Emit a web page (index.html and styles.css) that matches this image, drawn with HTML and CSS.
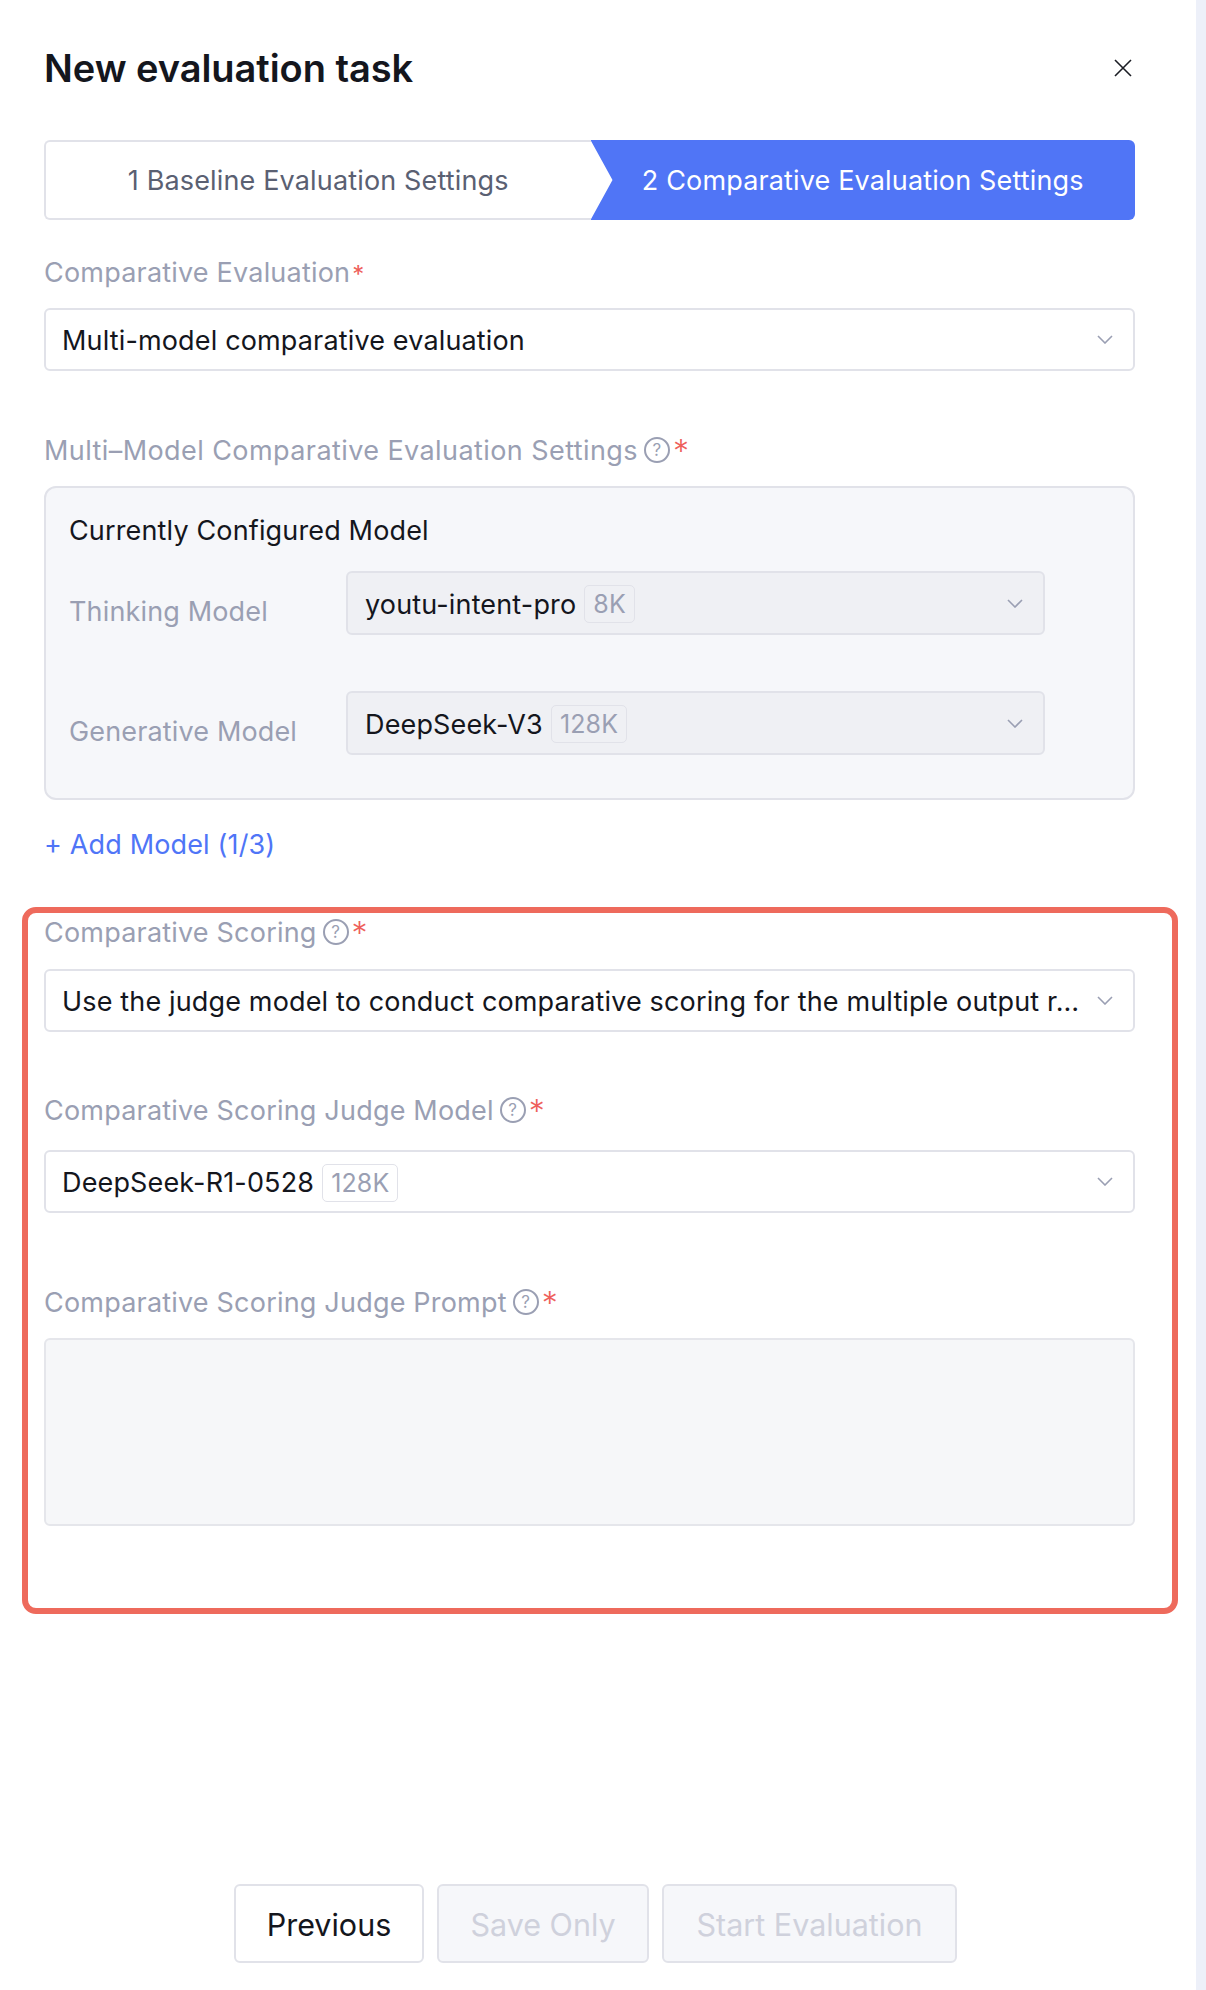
FILE: index.html
```html
<!DOCTYPE html>
<html lang="en">
<head>
    <meta charset="UTF-8">
    <title>New evaluation task</title>
    <link rel="stylesheet" href="styles.css">
</head>
<body>
    <div class="drawer">
        <div class="header">
            <h1>New evaluation task</h1>
            <svg class="close" viewBox="0 0 18 18"><path d="M1 1L17 17M17 1L1 17"/></svg>
        </div>
        <div class="steps">
            <div class="step">1 Baseline Evaluation Settings</div>
            <div class="step active">2 Comparative Evaluation Settings</div>
        </div>

        <div class="label first">Comparative Evaluation<span class="star small">*</span></div>
        <div class="select">
            <span class="value">Multi-model comparative evaluation</span>
            <svg class="arrow" viewBox="0 0 16 9"><path d="M1 1L8 8L15 1"/></svg>
        </div>

        <div class="label gap-lg wide">Multi–Model Comparative Evaluation Settings<span class="help">?</span><span class="star">*</span></div>
        <div class="model-box">
            <div class="box-title">Currently Configured Model</div>
            <div class="model-row">
                <div class="row-label">Thinking Model</div>
                <div class="select grey">
                    <span class="value">youtu-intent-pro</span><span class="tag">8K</span>
                    <svg class="arrow" viewBox="0 0 16 9"><path d="M1 1L8 8L15 1"/></svg>
                </div>
            </div>
            <div class="model-row">
                <div class="row-label">Generative Model</div>
                <div class="select grey">
                    <span class="value">DeepSeek-V3</span><span class="tag">128K</span>
                    <svg class="arrow" viewBox="0 0 16 9"><path d="M1 1L8 8L15 1"/></svg>
                </div>
            </div>
        </div>
        <div class="add-model">+ Add Model (1/3)</div>

        <div class="label scoring">Comparative Scoring<span class="help">?</span><span class="star">*</span></div>
        <div class="select">
            <span class="value">Use the judge model to conduct comparative scoring for the multiple output r…</span>
            <svg class="arrow" viewBox="0 0 16 9"><path d="M1 1L8 8L15 1"/></svg>
        </div>

        <div class="label judge">Comparative Scoring Judge Model<span class="help">?</span><span class="star">*</span></div>
        <div class="select">
            <span class="value">DeepSeek-R1-0528</span><span class="tag">128K</span>
            <svg class="arrow" viewBox="0 0 16 9"><path d="M1 1L8 8L15 1"/></svg>
        </div>

        <div class="label prompt">Comparative Scoring Judge Prompt<span class="help">?</span><span class="star">*</span></div>
        <div class="textarea"></div>

        <div class="footer">
            <button class="btn prev">Previous</button>
            <button class="btn off save">Save Only</button>
            <button class="btn off start">Start Evaluation</button>
        </div>

        <div class="highlight"></div>
    </div>
</body>
</html>
```

FILE: styles.css
```css
* { box-sizing: border-box; }
html, body { margin: 0; padding: 0; }
body { height: 1990px; background: #edf0f9; font-family: 'Inter', 'Liberation Sans', sans-serif; font-size: 27px; letter-spacing: 0.15px; overflow: hidden; }
.drawer { position: relative; width: 1196px; height: 1990px; padding: 44px 61px 0 44px; background: #fff; }

.header { display: flex; justify-content: space-between; align-items: center; height: 48px; margin-bottom: 48px; }
h1 { margin: 0; font-size: 38px; line-height: 48px; font-weight: 600; letter-spacing: -0.05px; color: #14161d; }
.close { width: 18px; height: 18px; margin-right: 3px; fill: none; stroke: #1b1d24; stroke-width: 1.6; }

.steps { display: flex; height: 80px; }
.step { flex: 1; display: flex; align-items: center; justify-content: center; color: #5a6072; background: #fff; border: 2px solid #e1e2e9; border-right: none; border-radius: 6px 0 0 6px; }
.step.active { color: #fff; background: #5075f6; border: none; border-radius: 0 6px 6px 0; clip-path: polygon(0 0, 100% 0, 100% 100%, 0 100%, 22px 50%); }

.label { display: flex; align-items: center; height: 36px; margin-bottom: 18px; letter-spacing: 0.2px; color: #9a9fb3; }
.label.wide { letter-spacing: 0.42px; }
.label.first { margin-top: 34px; }
.label.gap-lg { margin-top: 61px; }
.label.scoring { margin-top: 51px; margin-bottom: 19px; }
.label.judge { margin-top: 60px; margin-bottom: 22px; }
.label.prompt { margin-top: 71px; margin-bottom: 18px; }
.star { margin-left: 3px; color: #ee5f5b; font-size: 32px; font-weight: 300; line-height: 36px; padding-top: 4px; }
.star.small { margin-left: 2px; font-size: 24px; font-weight: 400; padding-top: 6px; }
.help { display: flex; align-items: center; justify-content: center; width: 26px; height: 26px; margin-left: 6px; border: 2px solid #9a9fb3; border-radius: 50%; font-size: 17px; line-height: 1; }

.select { display: flex; align-items: center; height: 63px; padding: 0 20px 0 16px; background: #fff; border: 2px solid #e1e2e9; border-radius: 6px; color: #14161d; }
.select.grey { width: 699px; height: 64px; padding-left: 17px; background: #eff0f4; }
.value { margin-top: 2px; white-space: nowrap; }
.arrow { flex: none; width: 16px; height: 9px; margin-left: auto; fill: none; stroke: #9a9fb3; stroke-width: 1.6; }
.tag { flex: none; display: flex; align-items: center; height: 38px; margin: 2px 0 0 8px; padding: 0 8px; border: 1px solid #e1e2e9; border-radius: 5px; font-size: 25px; color: #9a9fb3; }

.model-box { height: 314px; padding: 25px 23px 0; background: #f6f7fa; border: 2px solid #e1e2e9; border-radius: 12px; }
.box-title { height: 36px; margin-bottom: 22px; line-height: 36px; color: #14161d; }
.model-row { display: flex; margin-bottom: 56px; }
.row-label { width: 277px; margin-top: 23px; line-height: 36px; color: #9a9fb3; }
.add-model { height: 36px; margin-top: 27px; line-height: 36px; color: #4f75f7; }

.textarea { height: 188px; background: #f6f7f9; border: 2px solid #e5e6eb; border-radius: 6px; }

.footer { display: flex; justify-content: center; gap: 13px; margin-top: 358px; padding-left: 12px; }
.btn { height: 79px; padding: 2px 0 0; font-family: inherit; font-size: 30.5px; background: #fff; border: 2px solid #e1e2e9; border-radius: 6px; color: #14161d; }
.btn.prev { width: 190px; }
.btn.save { width: 212px; }
.btn.start { width: 295px; }
.btn.off { background: #f6f7fa; color: #cfd1dc; }

.highlight { position: absolute; left: 22px; top: 907px; width: 1156px; height: 707px; border: 6px solid #ee6a5c; border-radius: 14px; }
```
